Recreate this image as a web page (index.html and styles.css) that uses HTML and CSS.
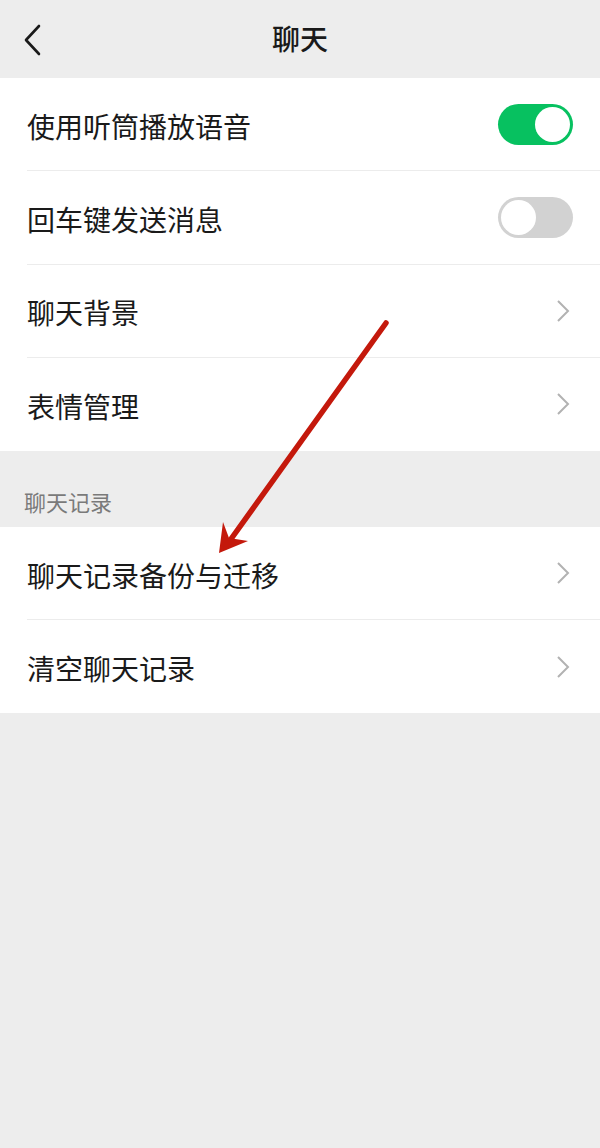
FILE: index.html
```html
<!DOCTYPE html>
<html lang="zh">
<head>
<meta charset="utf-8">
<link rel="stylesheet" href="styles.css">
</head>
<body>
<div class="page">
  <header class="topbar">
    <span class="back">
      <svg width="20" height="32" viewBox="0 0 20 32"><path d="M16 2 L3 16 L16 30" fill="none" stroke="#1a1a1a" stroke-width="2.6" stroke-linecap="round" stroke-linejoin="round"/></svg>
    </span>
    <h1 class="title">聊天</h1>
  </header>

  <section class="group first">
    <div class="row"><span class="label">使用听筒播放语音</span><span class="switch on"><span class="knob"></span></span></div>
    <div class="row"><span class="label">回车键发送消息</span><span class="switch off"><span class="knob"></span></span></div>
    <div class="row"><span class="label">聊天背景</span><span class="chev"><svg width="14" height="24" viewBox="0 0 14 24"><path d="M2 2 L12 12 L2 22" fill="none" stroke="#b2b2b2" stroke-width="2"/></svg></span></div>
    <div class="row"><span class="label">表情管理</span><span class="chev"><svg width="14" height="24" viewBox="0 0 14 24"><path d="M2 2 L12 12 L2 22" fill="none" stroke="#b2b2b2" stroke-width="2"/></svg></span></div>
  </section>

  <div class="section-title">聊天记录</div>

  <section class="group">
    <div class="row"><span class="label">聊天记录备份与迁移</span><span class="chev"><svg width="14" height="24" viewBox="0 0 14 24"><path d="M2 2 L12 12 L2 22" fill="none" stroke="#b2b2b2" stroke-width="2"/></svg></span></div>
    <div class="row"><span class="label">清空聊天记录</span><span class="chev"><svg width="14" height="24" viewBox="0 0 14 24"><path d="M2 2 L12 12 L2 22" fill="none" stroke="#b2b2b2" stroke-width="2"/></svg></span></div>
  </section>

  <svg class="arrow" width="600" height="1148" viewBox="0 0 600 1148">
    <line x1="386" y1="323" x2="226" y2="546" stroke="#c4190c" stroke-width="5.5" stroke-linecap="round"/>
    <path d="M219 553 L223 522 L229 538 L248 541 Z" fill="#c4190c"/>
  </svg>
</div>
</body>
</html>
```

FILE: styles.css
```css
html, body {
  margin: 0;
  padding: 0;
}
body {
  background: #ededed;
  font-family: "Noto Sans CJK SC", "Noto Sans", sans-serif;
  color: #1a1a1a;
}
.page {
  position: relative;
  width: 600px;
  height: 1148px;
  background: #ededed;
  overflow: hidden;
}
.topbar {
  height: 78px;
  display: flex;
  align-items: center;
  justify-content: center;
  position: relative;
}
.back {
  position: absolute;
  left: 23px;
  top: 24px;
  display: block;
  line-height: 0;
}
.title {
  margin: 0;
  font-size: 28px;
  font-weight: 500;
  color: #1a1a1a;
  line-height: 1;
  margin-bottom: 2px;
}
.group {
  background: #fff;
}
.row {
  height: 93px;
  margin-left: 27px;
  padding-right: 27px;
  display: flex;
  align-items: center;
  justify-content: space-between;
  border-bottom: 1px solid #ececec;
  box-sizing: border-box;
}
.group.first .row {
  height: 93.25px;
}
.row:last-child {
  border-bottom: none;
}
.label {
  font-size: 28px;
  color: #1a1a1a;
  line-height: 1;
  padding-top: 3px;
}
.switch {
  width: 75px;
  height: 41px;
  border-radius: 21px;
  box-sizing: border-box;
  padding: 3px;
  display: flex;
}
.switch.on {
  background: #07c160;
  justify-content: flex-end;
}
.switch.off {
  background: #d2d2d2;
  justify-content: flex-start;
}
.knob {
  width: 35px;
  height: 35px;
  border-radius: 50%;
  background: #fff;
}
.chev {
  line-height: 0;
  margin-right: 3px;
}
.section-title {
  height: 76px;
  box-sizing: border-box;
  padding: 39px 0 0 24px;
  font-size: 22px;
  color: #7a7a7a;
  line-height: 1;
}
.arrow {
  position: absolute;
  left: 0;
  top: 0;
  pointer-events: none;
}
```
